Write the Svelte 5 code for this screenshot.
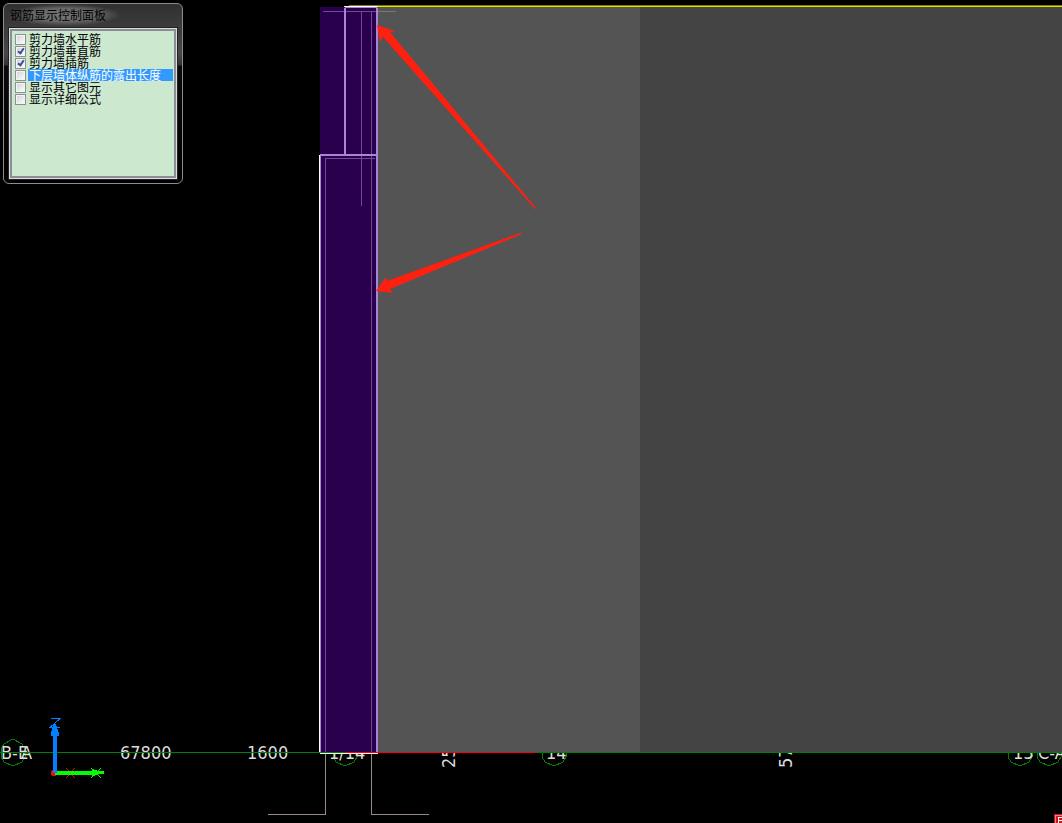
<script>
  // Rebar section viewer: a dark model canvas with the display-control panel floating over it.
  let options = $state([
    { label: "剪力墙水平筋", checked: false },
    { label: "剪力墙垂直筋", checked: true },
    { label: "剪力墙插筋", checked: true },
    { label: "下层墙体纵筋的露出长度", checked: false },
    { label: "显示其它图元", checked: false },
    { label: "显示详细公式", checked: false },
  ]);
  let selected = $state(3);

  const GROUND = 752;

  // axis bubbles; most are half hidden behind the wall
  const bubbles = [13, 345, 554, 1020, 1049];
  const hex = (cx) => `M${cx} 739 l9 5 3 5 v8 l-3 5 -9 4 -9 -4 -3 -5 v-8 l3 -5z`;

  const labels = [
    { x: 1, text: "B-E" },
    { x: 21, text: "A" },
    { x: 120, text: "67800" },
    { x: 247, text: "1600" },
    { x: 329, text: "1/14" },
    { x: 546, text: "14" },
    { x: 1013, text: "13" },
    { x: 1038, text: "C-A" },
  ];
  const vertical = [
    { x: 455, text: "2500" },
    { x: 792, text: "5700" },
  ];
</script>

<main class="viewer">
  <svg class="model" viewBox="0 0 1062 823" role="img" aria-label="剪力墙钢筋三维">
    <!-- axis labels and bubbles -->
    {#each bubbles as cx}
      <path d={hex(cx)} class="bubble" />
    {/each}
    {#each labels as l}
      <text x={l.x} y="759" class="dim">{l.text}</text>
    {/each}
    {#each vertical as v}
      <text x={v.x} y="768" class="dim" transform={`rotate(-90 ${v.x} 768)`}>{v.text}</text>
    {/each}

    <!-- wall faces -->
    <rect x="377" y="7" width="263" height="745" fill="#545454" />
    <rect x="640" y="7" width="422" height="745" fill="#444" />
    <rect x="320" y="7" width="57" height="746" fill="#28004c" />

    <g shape-rendering="crispEdges">
      <rect x="349" y="5" width="713" height="1" fill="#807800" />
      <rect x="349" y="6" width="713" height="1" fill="#e8e000" />

      <!-- vertical bars and hooks -->
      <path d="M323 11.5H376M325.5 158V752M326 158.5H375M361.5 12V206M371.5 12V752" class="bar" />
      <path d="M376 11.5H396" stroke="#777" />
      <path d="M325.5 754V814.5H268M371.5 754V814.5H429" class="hook" />

      <!-- outlines -->
      <path d="M345 8V155M320 155H377M377 8V752" class="edge" />
      <rect x="344" y="6" width="34" height="1" fill="#fff" />
      <rect x="345" y="7" width="32" height="1" fill="#aa84d6" />
      <rect x="319" y="155" width="1" height="598" fill="#fff" />
      <rect x="320" y="155" width="1" height="597" fill="#aa84d6" />

      <rect x="0" y={GROUND} width="345" height="1" fill="#008000" />
      <rect x="536" y={GROUND} width="526" height="1" fill="#008000" />
      <rect x="345" y={GROUND} width="191" height="1" fill="#f00" />
      <rect x="320" y="753" width="58" height="1" fill="#fff" />
    </g>

    <!-- callout arrows -->
    <path d="M377 25L395 31 390 32 536 208 535 209 383 37 380 42z" class="callout" />
    <path d="M376 291L386 277 387 281 520 233 522 234 390 289 393 293z" class="callout" />

    <!-- axis tripod -->
    <g shape-rendering="crispEdges">
      <circle cx="54" cy="773" r="3" fill="#f00" />
      <path d="M66 768L75 778M75 768L66 778" stroke="#f00" />
      <path d="M55 771H92V769L98 771H104V774H98L92 777V775H55z" fill="#0f0" />
      <path d="M91 768L101 778M101 768L91 778" stroke="#0f0" />
      <path d="M53 773V736H51V733L54 724H56L59 733V736H57V773z" fill="#0080ff" />
      <path d="M51 718.5H60L50 727.5H60" stroke="#0080ff" fill="none" />
    </g>

    <!-- corner marker -->
    <g shape-rendering="crispEdges">
      <rect x="1054" y="814" width="8" height="9" fill="#c8171e" />
      <path d="M1062 815.5H1055.5V823" stroke="#f08080" fill="none" />
      <path d="M1062 817.5H1058.5V823M1059 820.5H1062" stroke="#fff" fill="none" />
    </g>
  </svg>

  <section class="panel">
    <h1>钢筋显示控制面板</h1>
    <ul>
      {#each options as opt, i}
        <li>
          <label>
            <input type="checkbox" bind:checked={opt.checked} onfocus={() => (selected = i)} />
            <span class:selected={i === selected}>{opt.label}</span>
          </label>
        </li>
      {/each}
    </ul>
  </section>
</main>

<style>
  :global(body) { margin: 0; background: #000; }
  .viewer { position: relative; min-height: 100vh; overflow: hidden; background: #000; }
  .model { display: block; width: 100%; height: auto; }
  .dim { fill: #ddd; font-family: "DejaVu Sans Condensed", "DejaVu Sans", sans-serif; font-size: 18px; }
  .bubble { fill: none; stroke: #008000; shape-rendering: crispEdges; }
  .bar { stroke: #72479a; fill: none; }
  .hook { stroke: #978a80; fill: none; }
  .edge { stroke: #aa84d6; stroke-width: 2; fill: none; }
  .callout { fill: #ff2010; }

  .panel {
    position: absolute;
    top: 3px;
    left: 3px;
    box-sizing: border-box;
    width: 180px;
    padding: 0 5px 4px 5px;
    border: 1px solid #8c8c8c;
    border-radius: 6px;
    background: linear-gradient(#303030, #3c3c3c 24px, #484848 50px, #333 61px, #0a0a0a 62px, #000);
    font-family: "Noto Sans CJK SC", sans-serif;
    font-size: 12px;
  }
  h1 {
    width: 108px;
    margin: 0 0 2px;
    padding: 0 2px 0 1px;
    background: radial-gradient(closest-side, #777, #666 60%, transparent);
    color: #000;
    font-size: 12px;
    font-weight: 400;
    line-height: 22px;
  }
  ul {
    box-sizing: border-box;
    height: 151px;
    margin: 0;
    padding: 4px 3px 0 4px;
    border: 1px solid #ddd;
    outline: 1px solid #222;
    box-shadow: inset 0 0 0 2px #8a8f95;
    background: #cce8cf;
    list-style: none;
  }
  li, label { height: 12px; }
  label { display: flex; align-items: center; gap: 2px; line-height: 12px; color: #000; }
  input {
    appearance: none;
    flex: none;
    box-sizing: border-box;
    width: 11px;
    height: 11px;
    margin: 0 0 0 1px;
    border: 1px solid #8e8f8f;
    background: linear-gradient(135deg, #ccd0d5, #fff);
    box-shadow: inset 0 0 0 1px #f4f4f4;
  }
  input:checked::after {
    content: "";
    display: block;
    width: 2px;
    height: 5px;
    margin: 0 0 0 3px;
    border: solid #3d4f96;
    border-width: 0 2px 2px 0;
    transform: rotate(35deg);
  }
  span { flex: 1; padding-left: 1px; white-space: nowrap; }
  .selected { background: #3399ff; color: #fff; }
</style>
